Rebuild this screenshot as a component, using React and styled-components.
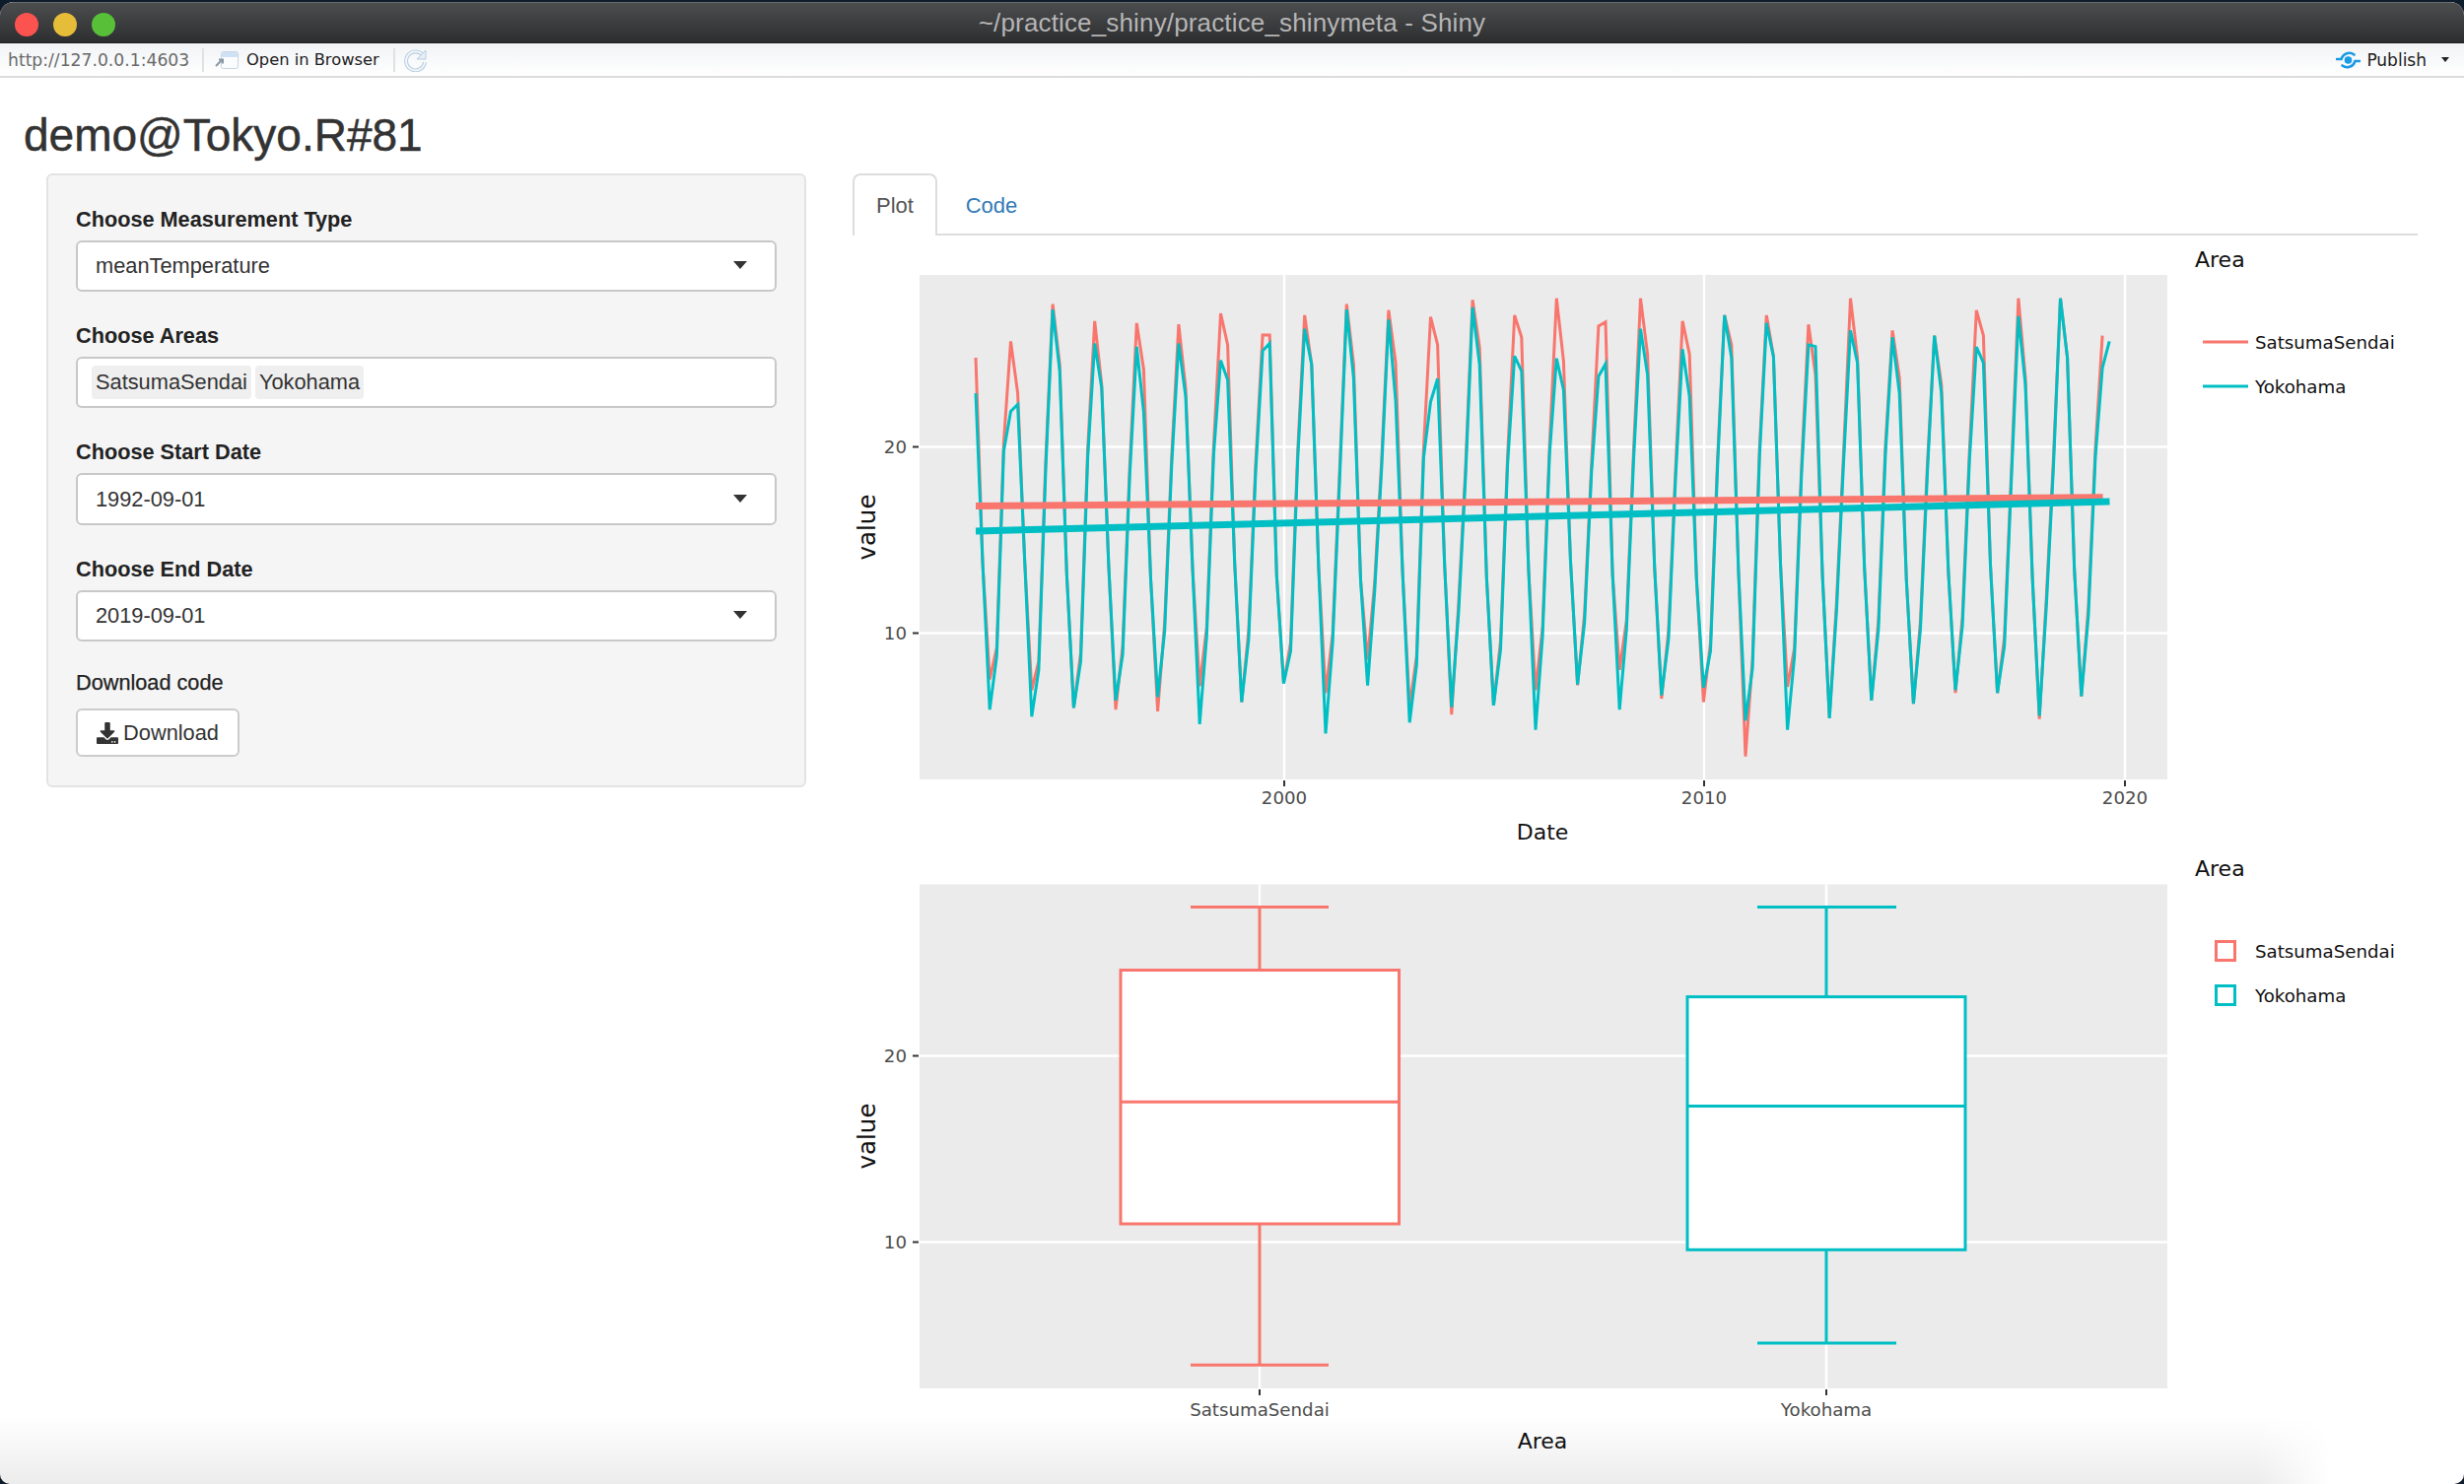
import React from "react";
import styled, { createGlobalStyle } from "styled-components";
import { FaDownload } from "react-icons/fa";

const RED = "#F8766D";
const TEAL = "#00BFC4";

const Global = createGlobalStyle`
  html, body { margin: 0; padding: 0; background: #0e1c2b; }
  * { box-sizing: border-box; }
`;

const Desktop = styled.div`
  width: 2500px;
  height: 1506px;
  padding-top: 2px;
  background: #0e1c2b;
  overflow: hidden;
  font-family: "Liberation Sans", Arial, sans-serif;
`;

const Win = styled.div`
  position: relative;
  height: 1504px;
  display: flex;
  flex-direction: column;
  background: #fff;
  border-radius: 14px 14px 10px 10px;
  overflow: hidden;
`;

const TitleBar = styled.div`
  height: 42px;
  flex: none;
  position: relative;
  display: flex;
  align-items: center;
  justify-content: center;
  background: linear-gradient(to bottom, #4c4d4f, #2d2e30);
  border-top: 1px solid #6a6b6d;
  border-bottom: 1px solid #1c1c1c;
`;

const TrafficLights = styled.div`
  position: absolute;
  left: 15px;
  top: 10px;
  display: flex;
  gap: 15px;
`;

const Light = styled.span`
  width: 24px;
  height: 24px;
  border-radius: 50%;
  background: ${(p) => p.$color};
`;

const WindowTitle = styled.div`
  font-size: 26px;
  color: #b5b5b5;
  letter-spacing: 0.15px;
`;

const Toolbar = styled.div`
  height: 35px;
  flex: none;
  display: flex;
  align-items: center;
  padding: 0 15px 0 8px;
  background: linear-gradient(to bottom, #f1f3f5, #ffffff);
  border-bottom: 2px solid #dcdcdc;
  font-family: "DejaVu Sans", sans-serif;
  font-size: 16.3px;
`;

const UrlText = styled.span`
  color: #6a6a6a;
  font-size: 17.2px;
  width: 197px;
  flex: none;
`;

const Divider = styled.span`
  width: 2px;
  height: 24px;
  flex: none;
  background: #dfe1e3;
`;

const ToolButton = styled.span`
  display: flex;
  align-items: center;
  gap: 8px;
  color: #1d1d1d;
  margin-left: 11px;
  width: 181px;
  flex: none;
`;

const Spacer = styled.div`
  flex: 1;
`;

const PublishText = styled.span`
  color: #222;
  font-size: 17px;
  margin-left: 6px;
`;

const SmallCaret = styled.span`
  width: 0;
  height: 0;
  margin-left: 15px;
  border-left: 4.5px solid transparent;
  border-right: 4.5px solid transparent;
  border-top: 5px solid #222;
`;

const Page = styled.div`
  flex: 1;
  display: flex;
  flex-direction: column;
`;

const Heading = styled.h2`
  height: 97px;
  margin: 0;
  padding: 34px 0 0 24px;
  font-size: 46px;
  line-height: 48px;
  font-weight: 400;
  color: #333;
  -webkit-text-stroke: 0.5px #333;
`;

const Columns = styled.div`
  display: flex;
  align-items: flex-start;
  padding-left: 47px;
  gap: 47px;
`;

const Well = styled.form`
  width: 771px;
  height: 623px;
  flex: none;
  padding: 29px 28px 0 28px;
  background: #f5f5f5;
  border: 2px solid #e3e3e3;
  border-radius: 6px;
  display: flex;
  flex-direction: column;
`;

const Field = styled.div`
  display: flex;
  flex-direction: column;
  margin-bottom: ${(p) => p.$gap || 29}px;
`;

const Label = styled.label`
  height: 32px;
  line-height: 32px;
  margin-bottom: 5px;
  font-size: 21.7px;
  font-weight: ${(p) => (p.$plain ? 400 : 700)};
  color: #222;
  -webkit-text-stroke: ${(p) => (p.$plain ? "0.25px #222" : "0")};
`;

const SelectBox = styled.div`
  height: ${(p) => p.$h || 52}px;
  display: flex;
  align-items: center;
  justify-content: space-between;
  padding: 0 28px 0 18px;
  background: #fff;
  border: 2px solid #c8c8c8;
  border-radius: 6px;
  font-size: 21.8px;
  color: #333;
`;

const Caret = styled.span`
  width: 0;
  height: 0;
  margin-top: -2px;
  border-left: 7px solid transparent;
  border-right: 7px solid transparent;
  border-top: 8px solid #333;
`;

const ChipBox = styled.div`
  height: 52px;
  display: flex;
  align-items: center;
  gap: 4px;
  padding: 0 14px;
  background: #fff;
  border: 2px solid #c8c8c8;
  border-radius: 6px;
`;

const Chip = styled.span`
  height: 34px;
  line-height: 34px;
  padding: 0 4px;
  background: #efefef;
  border-radius: 4px;
  font-size: 21.8px;
  color: #333;
`;

const DownloadButton = styled.button`
  width: 166px;
  height: 49px;
  margin-top: 5px;
  display: flex;
  align-items: center;
  justify-content: center;
  gap: 5px;
  padding: 0;
  background: #fff;
  border: 2px solid #ccc;
  border-radius: 6px;
  font-family: inherit;
  font-size: 21.8px;
  color: #333;
`;

const MainPanel = styled.div`
  width: 1588px;
  flex: none;
`;

const TabBar = styled.div`
  height: 63px;
  display: flex;
  border-bottom: 2px solid #ddd;
`;

const Tab = styled.div`
  width: 86px;
  height: 63px;
  display: flex;
  align-items: center;
  justify-content: center;
  font-size: 22px;
  border: 2px solid ${(p) => (p.$active ? "#ddd" : "transparent")};
  border-bottom: none;
  border-radius: 8px 8px 0 0;
  background: ${(p) => (p.$active ? "#fff" : "transparent")};
  color: ${(p) => (p.$active ? "#555" : "#337ab7")};
  margin-left: ${(p) => (p.$active ? 0 : "12px")};
`;

const PlotArea = styled.div`
  padding-top: 1px;
`;

const PlotSvg = styled.svg`
  display: block;
  width: 1610px;
  height: ${(p) => p.$h}px;
`;

const Text = styled.text`
  font-family: "DejaVu Sans", sans-serif;
`;

const TickText = styled(Text)`
  font-size: 18.2px;
  fill: #4d4d4d;
`;

const AxisTitle = styled(Text)`
  font-size: ${(p) => p.$size || 22}px;
  fill: #111;
`;

const LegendText = styled(Text)`
  font-size: 18.2px;
  fill: #111;
`;

const BottomShade = styled.div`
  position: absolute;
  left: 0;
  right: 0;
  bottom: 0;
  height: 68px;
  pointer-events: none;
  background: linear-gradient(to bottom, rgba(0, 0, 0, 0), rgba(0, 0, 0, 0.075));
  mask-image: linear-gradient(to right, #000 2290px, transparent 2365px);
`;

/* y positions below are read off the chart; low = winter, peak/next = summer */
const redLow = [1218,1250,1302,1307,1312,1238,1285,1228,1258,1160,1300,1322,1295,1250,1235,1190,1275,1285,1445,1240,1330,1280,1290,1258,1258,1335,1268];
const tealLow = [1307,1328,1302,1280,1270,1350,1285,1230,1378,1236,1345,1300,1295,1367,1233,1307,1265,1243,1340,1367,1333,1280,1290,1250,1258,1325,1268];
const redPeak = [222,112,162,168,172,140,203,145,112,130,150,100,145,95,177,95,162,145,145,172,95,190,205,130,95,95,205];
const tealPeak = [428,128,228,238,228,278,250,185,128,158,400,122,265,272,325,185,245,145,168,232,190,210,205,238,148,95,300];
const redNext = [375,290,350,305,360,232,203,290,290,285,232,240,210,280,165,260,260,232,265,320,270,330,350,205,330,270];
const tealNext = [408,310,360,430,385,335,228,290,330,395,332,290,310,365,288,320,385,270,268,237,285,375,375,285,350,270,222];
const march = [1150,1190,1165,1145,1075,1090,1100,1135,1110,960,1175,1020,1130,1090,1050,1070,1100,1135,1185,1150,1020,1070,1070,1060,1120,1000,1030];

const xAt = (i) => 990 + i * 7.1;
const yAt = (z) => 270 + z / 2.904;

function series(start, nov, low, peak, next, count, delta) {
  const v = [start, nov];
  for (let k = 0; k < 27; k++) {
    v.push(low[k]);
    v.push(march[k] + delta);
    v.push(545 + ((k * 53) % 85) + delta);
    v.push(peak[k]);
    if (k < 26 || next.length > 26) v.push(next[k]);
    v.push(870 + ((k * 37) % 60));
  }
  return v
    .slice(0, count)
    .map((z, i) => `${xAt(i).toFixed(1)},${yAt(z).toFixed(1)}`)
    .join(" ");
}

const redPoints = series(270, 880, redLow, redPeak, redNext, 162, -25);
const tealPoints = series(375, 880, tealLow, tealPeak, tealNext, 163, 0);

const Panel = ({ top, bottom, hLines, vLines }) => (
  <g>
    <rect x="933" y={top} width="1266" height={bottom - top} fill="#ebebeb" />
    {hLines.map((y) => (
      <line key={y} x1="933" x2="2199" y1={y} y2={y} stroke="#fff" strokeWidth="2.4" />
    ))}
    {vLines.map((x) => (
      <line key={x} x1={x} x2={x} y1={top} y2={bottom} stroke="#fff" strokeWidth="2.4" />
    ))}
    {hLines.map((y) => (
      <line key={y} x1="926" x2="932" y1={y} y2={y} stroke="#333" strokeWidth="2" />
    ))}
    {vLines.map((x) => (
      <line key={x} x1={x} x2={x} y1={bottom + 1} y2={bottom + 7} stroke="#333" strokeWidth="2" />
    ))}
    {hLines.map((y, i) => (
      <TickText key={y} x="920" y={y + 6} textAnchor="end">
        {i === 0 ? 20 : 10}
      </TickText>
    ))}
  </g>
);

const TimeSeries = () => (
  <PlotSvg $h={620} viewBox="865 240 1610 620">
    <Panel top={279} bottom={791} hLines={[453.5, 642.5]} vLines={[1303, 1729, 2156]} />
    {[["2000", 1303], ["2010", 1729], ["2020", 2156]].map(([t, x]) => (
      <TickText key={t} x={x} y="816" textAnchor="middle">{t}</TickText>
    ))}
    <polyline points={redPoints} fill="none" stroke={RED} strokeWidth="3" strokeLinejoin="miter" />
    <polyline points={tealPoints} fill="none" stroke={TEAL} strokeWidth="3" strokeLinejoin="miter" />
    <line x1="990" y1="513.5" x2="2133.6" y2="504.8" stroke={RED} strokeWidth="7" />
    <line x1="990" y1="539" x2="2140.5" y2="509" stroke={TEAL} strokeWidth="7" />
    <AxisTitle x="1565" y="851.5" textAnchor="middle">Date</AxisTitle>
    <AxisTitle $size={24.5} transform="translate(888 535) rotate(-90)" textAnchor="middle">value</AxisTitle>
    <AxisTitle x="2227" y="271">Area</AxisTitle>
    <line x1="2235" x2="2281" y1="347" y2="347" stroke={RED} strokeWidth="3" />
    <line x1="2235" x2="2281" y1="392" y2="392" stroke={TEAL} strokeWidth="3" />
    <LegendText x="2288" y="354">SatsumaSendai</LegendText>
    <LegendText x="2288" y="399">Yokohama</LegendText>
  </PlotSvg>
);

const Box = ({ color, cx, left, right, capL, capR, wTop, q3, med, q1, wBot }) => (
  <g stroke={color} strokeWidth="3" fill="none">
    <line x1={cx} x2={cx} y1={wTop} y2={q3} />
    <line x1={cx} x2={cx} y1={q1} y2={wBot} />
    <line x1={capL} x2={capR} y1={wTop} y2={wTop} />
    <line x1={capL} x2={capR} y1={wBot} y2={wBot} />
    <rect x={left} y={q3} width={right - left} height={q1 - q3} fill="#fff" />
    <line x1={left} x2={right} y1={med} y2={med} />
  </g>
);

const BoxPlot = () => (
  <PlotSvg $h={620} viewBox="865 860 1610 620">
    <Panel top={897.5} bottom={1409} hLines={[1071.5, 1260.5]} vLines={[1278, 1853]} />
    <Box color={RED} cx={1278} left={1137} right={1419.5} capL={1208} capR={1348} wTop={920.6} q3={984.5} med={1118.3} q1={1242} wBot={1385.3} />
    <Box color={TEAL} cx={1853} left={1712} right={1994} capL={1783} capR={1924} wTop={920.6} q3={1011.6} med={1122.5} q1={1268.3} wBot={1363} />
    <TickText x="1278" y="1437" textAnchor="middle">SatsumaSendai</TickText>
    <TickText x="1853" y="1437" textAnchor="middle">Yokohama</TickText>
    <AxisTitle x="1565" y="1470" textAnchor="middle">Area</AxisTitle>
    <AxisTitle $size={24.5} transform="translate(888 1153) rotate(-90)" textAnchor="middle">value</AxisTitle>
    <AxisTitle x="2227" y="889">Area</AxisTitle>
    <rect x="2248.5" y="955.5" width="19" height="19" fill="#fff" stroke={RED} strokeWidth="3" />
    <rect x="2248.5" y="1000.5" width="19" height="19" fill="#fff" stroke={TEAL} strokeWidth="3" />
    <LegendText x="2288" y="972">SatsumaSendai</LegendText>
    <LegendText x="2288" y="1017">Yokohama</LegendText>
  </PlotSvg>
);

const OpenIcon = () => (
  <svg width="24" height="20" viewBox="0 0 24 20">
    <rect x="6.5" y="1.5" width="17" height="17" rx="2" fill="#fbfcfe" stroke="#c9d6e4" />
    <rect x="7" y="2" width="16" height="5" rx="1.5" fill="#cfe1f5" />
    <path d="M1 16 L7 10 M4 9.5 H8 V13.5" fill="none" stroke="#8a98a6" strokeWidth="2" />
  </svg>
);

const RefreshWrap = styled.span`
  display: flex;
  margin-left: 9px;
`;

const RefreshIcon = () => (
  <RefreshWrap>
    <svg width="24" height="24" viewBox="0 0 24 24">
      <path d="M19 7 A9.5 9.5 0 1 0 21 14" fill="none" stroke="#bdd0e3" strokeWidth="4" />
      <path d="M19 7 A9.5 9.5 0 1 0 21 14" fill="none" stroke="#f4f7fa" strokeWidth="1.8" />
      <path d="M22 2 V11 H13 Z" fill="#e6eef6" stroke="#b8cce0" />
    </svg>
  </RefreshWrap>
);

const PublishIcon = () => (
  <svg width="25" height="18" viewBox="0 0 25 18" fill="none">
    <path d="M1 8 H5.5 C7.5 2 14 0 18.5 3.5" stroke="#1a9be6" strokeWidth="2.6" strokeLinecap="round" />
    <path d="M24 10 H19.5 C17.5 16 11 18 6.5 14.5" stroke="#1a9be6" strokeWidth="2.6" strokeLinecap="round" />
    <circle cx="12.5" cy="9" r="3.8" fill="#1a9be6" />
  </svg>
);

export default function App() {
  return (
    <Desktop>
      <Global />
      <Win>
        <TitleBar>
          <TrafficLights>
            <Light $color="#fb5350" />
            <Light $color="#e6bd39" />
            <Light $color="#58c038" />
          </TrafficLights>
          <WindowTitle>~/practice_shiny/practice_shinymeta - Shiny</WindowTitle>
        </TitleBar>
        <Toolbar>
          <UrlText>http://127.0.0.1:4603</UrlText>
          <Divider />
          <ToolButton>
            <OpenIcon />
            Open in Browser
          </ToolButton>
          <Divider />
          <RefreshIcon />
          <Spacer />
          <PublishIcon />
          <PublishText>Publish</PublishText>
          <SmallCaret />
        </Toolbar>
        <Page>
          <Heading>demo@Tokyo.R#81</Heading>
          <Columns>
            <Well>
              <Field>
                <Label>Choose Measurement Type</Label>
                <SelectBox>meanTemperature<Caret /></SelectBox>
              </Field>
              <Field>
                <Label>Choose Areas</Label>
                <ChipBox>
                  <Chip>SatsumaSendai</Chip>
                  <Chip>Yokohama</Chip>
                </ChipBox>
              </Field>
              <Field>
                <Label>Choose Start Date</Label>
                <SelectBox $h={53}>1992-09-01<Caret /></SelectBox>
              </Field>
              <Field $gap={26}>
                <Label>Choose End Date</Label>
                <SelectBox>2019-09-01<Caret /></SelectBox>
              </Field>
              <Label $plain>Download code</Label>
              <DownloadButton type="button">
                <FaDownload size={22} />
                Download
              </DownloadButton>
            </Well>
            <MainPanel>
              <TabBar>
                <Tab $active>Plot</Tab>
                <Tab>Code</Tab>
              </TabBar>
              <PlotArea>
                <TimeSeries />
                <BoxPlot />
              </PlotArea>
            </MainPanel>
          </Columns>
        </Page>
        <BottomShade />
      </Win>
    </Desktop>
  );
}
